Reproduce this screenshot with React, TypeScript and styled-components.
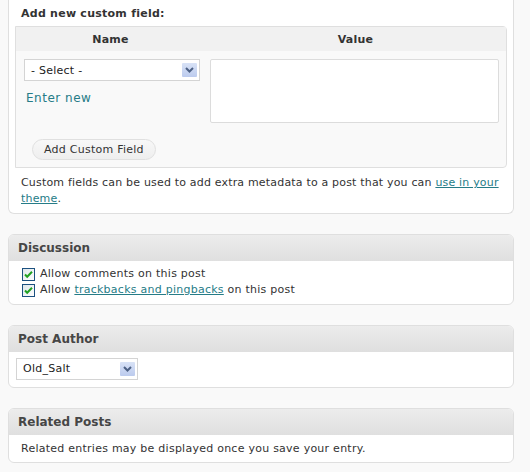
import React from "react";
import styled, { createGlobalStyle } from "styled-components";

const GlobalStyle = createGlobalStyle`
  html, body {
    margin: 0;
    padding: 0;
    background: #f9f9f9;
  }
  body {
    font-family: "DejaVu Sans", Verdana, sans-serif;
    font-size: 11px;
    letter-spacing: 0.25px;
    color: #333;
  }
`;

const Column = styled.div`
  width: 506px;
  padding: 0 0 0 8px;
  display: flex;
  flex-direction: column;
  gap: 20px;
`;

const Panel = styled.div<{ $cut?: boolean }>`
  background: #fff;
  border: 1px solid #dfdfdf;
  border-top: ${(p) => (p.$cut ? "none" : "1px solid #dfdfdf")};
  border-radius: ${(p) => (p.$cut ? "0 0 6px 6px" : "6px")};
  overflow: hidden;
`;

const PanelHead = styled.div`
  height: 26px;
  padding: 0 9px;
  display: flex;
  align-items: center;
  background: linear-gradient(#ececec, #dfdfdf);
  font-weight: bold;
  font-size: 12px;
  letter-spacing: 0;
  color: #464646;
`;

const PanelBody = styled.div<{ $pad?: string }>`
  padding: ${(p) => p.$pad || "6px 13px"};
  line-height: 16px;
`;

const FieldTitle = styled.div`
  font-weight: bold;
  font-size: 11px;
  padding: 7px 12px 6px;
  color: #333;
`;

const FieldBox = styled.div`
  margin: 0 6px;
  border: 1px solid #dfdfdf;
  border-radius: 0 4px 4px 0;
  background: #f9f9f9;
`;

const FieldHead = styled.div`
  display: grid;
  grid-template-columns: 189px 1fr;
  height: 24px;
  align-items: center;
  background: #f1f1f1;
  font-weight: bold;
  text-align: center;
  color: #333;
`;

const FieldRow = styled.div`
  display: grid;
  grid-template-columns: 186px 1fr;
  padding: 8px 7px 0 8px;
`;

const NameCell = styled.div`
  display: flex;
  flex-direction: column;
  gap: 10px;
`;

const SelectBox = styled.div<{ $w: number }>`
  width: ${(p) => p.$w}px;
  height: 22px;
  box-sizing: border-box;
  border: 1px solid #d4d4d4;
  background: #fff;
  display: flex;
  align-items: center;
  justify-content: space-between;
  padding: 0 2px 0 6px;
  font-size: 11px;
  color: #222;
`;

const ArrowBtn = styled.span`
  width: 15px;
  height: 14px;
  display: flex;
  align-items: center;
  justify-content: center;
  background: linear-gradient(#d8e2f6, #bccbee);
  border-radius: 1px;
`;

const ValueArea = styled.div`
  height: 62px;
  border: 1px solid #dcdcdc;
  background: #fff;
  border-radius: 2px;
`;

const Link = styled.a`
  color: #267c87;
  text-decoration: underline;
`;

const EnterNew = styled.a`
  color: #267c87;
  font-size: 12px;
  letter-spacing: 0.5px;
  padding-left: 2px;
`;

const AddButton = styled.button`
  margin: 16px 0 7px 16px;
  height: 21px;
  padding: 0 11px;
  border: 1px solid #e0e0e0;
  border-radius: 11px;
  background: linear-gradient(#f8f8f8, #eeeeee);
  font-family: inherit;
  font-size: 11px;
  letter-spacing: 0.25px;
  color: #333;
  align-self: flex-start;
`;

const Note = styled.p`
  margin: 0;
  padding: 7px 4px 6px 12px;
  line-height: 16px;
  letter-spacing: 0.18px;
  color: #333;
`;

const CheckRow = styled.label`
  display: flex;
  align-items: center;
  gap: 5px;
  height: 16px;
`;

const Check = () => (
  <svg width="13" height="13" viewBox="0 0 13 13">
    <defs>
      <linearGradient id="cb" x1="0" y1="0" x2="1" y2="1">
        <stop offset="0" stopColor="#dde6ea" />
        <stop offset="1" stopColor="#ffffff" />
      </linearGradient>
    </defs>
    <rect x="0.5" y="0.5" width="12" height="12" fill="url(#cb)" stroke="#1c5180" />
    <path d="M3 6.5 L5.2 8.8 L10 3.8" fill="none" stroke="#21a121" strokeWidth="2" />
  </svg>
);

const Chevron = () => (
  <svg width="9" height="6" viewBox="0 0 9 6">
    <path d="M1 1 L4.5 4.5 L8 1" fill="none" stroke="#4d6185" strokeWidth="2" />
  </svg>
);

const Select = ({ w, label }: { w: number; label: string }) => (
  <SelectBox $w={w}>
    <span>{label}</span>
    <ArrowBtn>
      <Chevron />
    </ArrowBtn>
  </SelectBox>
);

export default function App() {
  return (
    <>
      <GlobalStyle />
      <Column>
        <Panel $cut>
          <FieldTitle>Add new custom field:</FieldTitle>
          <FieldBox>
            <FieldHead>
              <span>Name</span>
              <span>Value</span>
            </FieldHead>
            <FieldRow>
              <NameCell>
                <Select w={176} label="- Select -" />
                <EnterNew>Enter new</EnterNew>
              </NameCell>
              <ValueArea />
            </FieldRow>
            <AddButton>Add Custom Field</AddButton>
          </FieldBox>
          <Note>
            Custom fields can be used to add extra metadata to a post that you can{" "}
            <Link>use in your theme</Link>.
          </Note>
        </Panel>

        <Panel>
          <PanelHead>Discussion</PanelHead>
          <PanelBody $pad="5px 13px 6px 13px">
            <CheckRow>
              <Check />
              <span>Allow comments on this post</span>
            </CheckRow>
            <CheckRow>
              <Check />
              <span>
                Allow <Link>trackbacks and pingbacks</Link> on this post
              </span>
            </CheckRow>
          </PanelBody>
        </Panel>

        <Panel>
          <PanelHead>Post Author</PanelHead>
          <PanelBody $pad="6px 7px 7px 7px">
            <Select w={122} label="Old_Salt" />
          </PanelBody>
        </Panel>

        <Panel>
          <PanelHead>Related Posts</PanelHead>
          <PanelBody $pad="6px 12px 5px">Related entries may be displayed once you save your entry.</PanelBody>
        </Panel>
      </Column>
    </>
  );
}
